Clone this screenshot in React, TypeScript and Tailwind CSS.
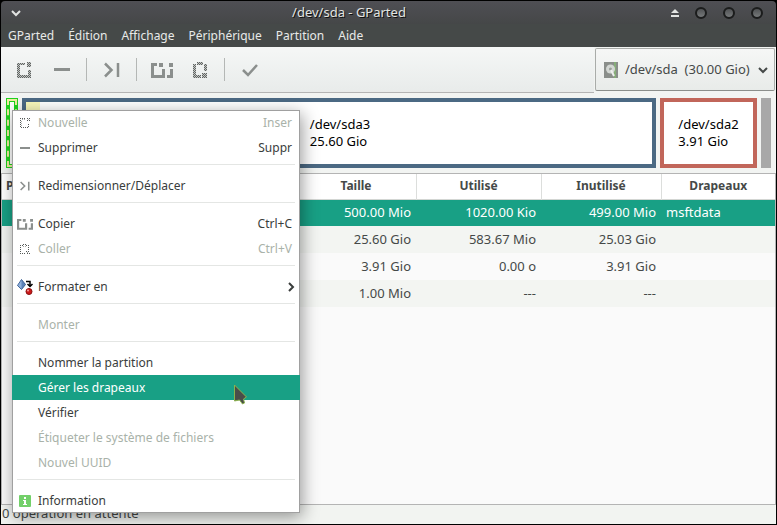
import React from 'react';

type IconProps = { className?: string };

function Checker({ id }: { id: string }) {
  return (
    <defs>
      <pattern id={id} width="2" height="2" patternUnits="userSpaceOnUse">
        <path d="M0 0h1v1H0zM1 1h1v1H1z" fill="#5f6361" />
        <path d="M1 0h1v1H1zM0 1h1v1H0z" fill="#c3c6c4" />
      </pattern>
    </defs>
  );
}

function NewIcon({ className }: IconProps) {
  return (
    <svg viewBox="0 0 14 16" className={className} shapeRendering="crispEdges" aria-hidden="true">
      <Checker id="checker-new" />
      <path d="M0 1h8v2H3v10h8V8h3v8H0zM10 0h4v5h-4z" fill="url(#checker-new)" />
    </svg>
  );
}

function SmallNewIcon({ className }: IconProps) {
  return (
    <svg viewBox="0 0 10 10" className={className} fill="none" stroke="#555957" shapeRendering="crispEdges" strokeDasharray="1 1" aria-hidden="true">
      <path d="M5 .5H.5v9h8V5M7 .5h3M7 2.500h3" />
      <path d="M5 1.500H1.500M8 1.500h2M1.500 3v6" stroke="#a9acaa" />
    </svg>
  );
}

function MinusIcon({ className }: IconProps) {
  return (
    <svg viewBox="0 0 16 16" className={className} fill="currentColor" aria-hidden="true">
      <path d="M0 6h16v3H0z" />
    </svg>
  );
}

function SmallMinusIcon({ className }: IconProps) {
  return (
    <svg viewBox="0 0 10 10" className={className} fill="currentColor" aria-hidden="true">
      <path d="M0 4h10v2H0z" />
    </svg>
  );
}

function ResizeIcon({ className }: IconProps) {
  return (
    <svg viewBox="0 0 16 16" className={className} fill="none" stroke="currentColor" strokeWidth="2.500" aria-hidden="true">
      <path d="M1 1.500L7.500 8 1 14.500M14 1v14" />
    </svg>
  );
}

function CopyIcon({ className }: IconProps) {
  return (
    <svg viewBox="0 0 22 16" className={className} fill="currentColor" aria-hidden="true">
      <path d="M0 1h6v3H3v9h8V7h3v9H0zM8 1h4v4H8zM18 1h4v4h-4zM19 7h3v9h-6v-3h3z" />
    </svg>
  );
}

function PasteIcon({ className }: IconProps) {
  return (
    <svg viewBox="0 0 14 16" className={className} shapeRendering="crispEdges" aria-hidden="true">
      <Checker id="checker-paste" />
      <path d="M4 0h6v3H4zM0 2h3v3h0v8h5v3H0zM11 2h3v7h-3zM9 11h5v5H9z" fill="url(#checker-paste)" />
    </svg>
  );
}

function SmallPasteIcon({ className }: IconProps) {
  return (
    <svg viewBox="0 0 10 10" className={className} fill="none" stroke="#555957" shapeRendering="crispEdges" strokeDasharray="1 1" aria-hidden="true">
      <path d="M3 1.500H.5v8H6M8.500 6V1.500H6M3 .5h4M6 7.500h3M7 9.500h3" />
      <path d="M3 2.500h4M7 8.500h2" stroke="#a9acaa" />
    </svg>
  );
}

function CheckIcon({ className }: IconProps) {
  return (
    <svg viewBox="0 0 16 16" className={className} fill="none" stroke="currentColor" strokeWidth="2.500" aria-hidden="true">
      <path d="M1 8l5 5L15 3" />
    </svg>
  );
}

function FormatIcon({ className }: IconProps) {
  return (
    <svg viewBox="0 0 16 16" className={className} aria-hidden="true">
      <path d="M4.500 .5l4 5-4 5-4-4z" fill="#5b83b8" stroke="#3a5f94" />
      <path d="M4.500 1v9L1 6.500z" fill="#8fb0da" />
      <path d="M9 2.500h4V6M10.500 5l2.500 2.500L15.500 5" fill="none" stroke="#000" strokeWidth="1.500" />
      <circle cx="12" cy="12.500" r="3" fill="#cc1a1a" stroke="#8a1010" />
      <circle cx="11" cy="11.500" r="1" fill="#f4a0a0" />
    </svg>
  );
}

function InfoIcon({ className }: IconProps) {
  return (
    <svg viewBox="0 0 12 12" className={className} aria-hidden="true">
      <rect width="12" height="12" rx="1" fill="#73d06a" />
      <path d="M5 2h2v2H5zM4 5h3v4h1v1H4V9h1V6H4z" fill="#fff" />
    </svg>
  );
}

function DiskIcon({ className }: IconProps) {
  return (
    <svg viewBox="0 0 14 16" className={className} aria-hidden="true">
      <rect width="14" height="16" fill="#8a8e8a" />
      <path d="M10 0h2v16h-2z" fill="#86ad78" />
      <circle cx="6.500" cy="7" r="4.500" fill="#d3d7d3" />
      <circle cx="6.500" cy="7" r="1.500" fill="#9a9f9a" />
      <path d="M7 8l3 6" stroke="#eef0ee" strokeWidth="2" />
    </svg>
  );
}

function Chevron({ className }: IconProps) {
  return (
    <svg viewBox="0 0 10 8" className={className} fill="none" stroke="currentColor" strokeWidth="2" aria-hidden="true">
      <path d="M1 2l4 4 4-4" />
    </svg>
  );
}

function TitleBar() {
  return (
    <header className="flex h-[23px] items-center rounded-t bg-linear-to-b from-[#4f4f54] to-[#454748] text-[#e2e4e2]">
      <button aria-label="Menu de la fenêtre" className="ml-2.5 flex w-16"><Chevron className="h-2 w-2.5" /></button>
      <h1 className="flex-1 pr-12 text-center [text-shadow:1px_1px_0_#111]">/dev/sda - GParted</h1>
      <div className="flex items-center gap-4 pr-[13px]">
        <button aria-label="Enrouler">
          <svg viewBox="0 0 8 8" className="h-2 w-2" fill="currentColor" aria-hidden="true"><path d="M4 0l4 4H0zM0 6h8v2H0z" /></svg>
        </button>
        {['Réduire', 'Agrandir', 'Fermer'].map((name) => (
          <button key={name} aria-label={name} className="size-3 rounded-full border-2 border-[#1b1c1c] bg-linear-to-b from-[#505254] to-[#76797a] bg-clip-padding" />
        ))}
      </div>
    </header>
  );
}

function MenuBar() {
  return (
    <nav className="flex h-[23px] items-center gap-3.5 bg-[#454948] px-[7px] text-xs text-[#e8eae8]">
      {['GParted', 'Édition', 'Affichage', 'Périphérique', 'Partition', 'Aide'].map((name) => (
        <button key={name}>{name}</button>
      ))}
    </nav>
  );
}

function ToolButton({ label, children }: { label: string; children: React.ReactNode }) {
  return <button aria-label={label} className="flex w-[38px] items-center justify-center">{children}</button>;
}

function ToolSeparator() {
  return <div className="my-[11px] mr-1.5 ml-[5px] w-px bg-[#b4b7b5]" />;
}

function Toolbar() {
  return (
    <div className="flex h-[46px] bg-linear-to-b from-[#f5f7f6] to-[#e8ebea] text-[#8b8f8d]">
      <div className="flex flex-1 border-b border-[#b4b4b4] pl-1">
        <ToolButton label="Nouvelle"><NewIcon className="h-4 w-3.5" /></ToolButton>
        <ToolButton label="Supprimer"><MinusIcon className="size-4" /></ToolButton>
        <ToolSeparator />
        <ToolButton label="Redimensionner/Déplacer"><ResizeIcon className="size-4" /></ToolButton>
        <ToolSeparator />
        <ToolButton label="Copier"><CopyIcon className="h-4 w-[22px]" /></ToolButton>
        <ToolButton label="Coller"><PasteIcon className="h-4 w-3.5" /></ToolButton>
        <ToolSeparator />
        <ToolButton label="Appliquer"><CheckIcon className="size-4" /></ToolButton>
      </div>
      <div className="flex bg-[#f2f4f2] px-px pt-px pb-0.5">
        <label className="flex items-center rounded-xs border border-[#a9aca9] border-b-[#8b8e8b] bg-linear-to-b from-[#f6f7f6] to-[#e8ebe9] pr-1.5 pl-2 text-[#454948]">
          <DiskIcon className="h-4 w-3.5" />
          <select aria-label="Périphérique" className="ml-[7px] appearance-none bg-transparent pr-2">
            <option>{'/dev/sda\u00a0\u00a0(30.00 Gio)'}</option>
          </select>
          <Chevron className="h-2 w-2.5" />
        </label>
      </div>
    </div>
  );
}

function DiskMap() {
  return (
    <div className="flex h-20 gap-1 bg-[#f2f4f2] p-[5px] text-black">
      <div className="w-3 bg-[#1fd21f] p-px">
        <div className="h-full border-2 border-dashed border-[#f0eda0] p-px">
          <div className="h-full bg-white" />
        </div>
      </div>
      <div className="flex flex-1 border-4 border-[#4b6983] bg-white">
        <div className="w-3.5 bg-[#f8f8ba]" />
        <div className="flex flex-1 items-center justify-center pr-3">
          <p>/dev/sda3<br />25.60 Gio</p>
        </div>
      </div>
      <div className="flex w-[97px] items-center justify-center border-4 border-[#c1665a] bg-white">
        <p>/dev/sda2<br />3.91 Gio</p>
      </div>
      <div className="w-2.5 bg-[#a8a8a8]" />
    </div>
  );
}

const rows = [
  ['500.00 Mio', '1020.00 Kio', '499.00 Mio', 'msftdata'],
  ['25.60 Gio', '583.67 Mio', '25.03 Gio', ''],
  ['3.91 Gio', '0.00 o', '3.91 Gio', ''],
  ['1.00 Mio', '---', '---', ''],
];

function PartitionTable() {
  return (
    <div className="flex-1 border border-[#b4b4b4] bg-[#fafafa]">
      <table className="w-full table-fixed border-collapse text-[#454948]">
        <colgroup>
          <col />
          <col className="w-[120px]" />
          <col className="w-[125px]" />
          <col className="w-[120px]" />
          <col className="w-[114px]" />
        </colgroup>
        <thead className="text-xs">
          <tr className="h-[25px] border-b border-[#d3d6d3] bg-white">
            <th className="border-r border-[#dcdedc] p-0 pl-1 text-left">Partition</th>
            <th className="border-r border-[#dcdedc] p-0">Taille</th>
            <th className="border-r border-[#dcdedc] p-0">Utilisé</th>
            <th className="border-r border-[#dcdedc] p-0">Inutilisé</th>
            <th className="p-0">Drapeaux</th>
          </tr>
        </thead>
        <tbody>
          {rows.map((row, i) => (
            <tr key={i} className={i === 0 ? 'h-[27px] bg-[#18a085] text-white' : i % 2 ? 'h-[27px] bg-[#f3f5f2]' : 'h-[27px] bg-[#fafafa]'}>
              <td className="p-0" />
              <td className="p-0 pr-[5px] text-right">{row[0]}</td>
              <td className="p-0 pr-[5px] text-right">{row[1]}</td>
              <td className="p-0 pr-[5px] text-right">{row[2]}</td>
              <td className="p-0 pl-[5px]">{row[3]}</td>
            </tr>
          ))}
        </tbody>
      </table>
    </div>
  );
}

type ItemProps = { label: string; icon?: React.ReactNode; hint?: string; disabled?: boolean; active?: boolean; submenu?: boolean };

function Item({ label, icon, hint, disabled, active, submenu }: ItemProps) {
  const tone = active ? 'bg-[#18a085] text-white' : disabled ? 'text-[#a9b2a9]' : 'text-[#3a3d3c]';
  return (
    <button role="menuitem" disabled={disabled} className={`flex h-[25px] w-full items-center pr-2 pl-[5px] text-left ${tone}`}>
      <span className="mr-[5px] flex w-4 justify-center text-[#8b8f8d]">{icon}</span>
      <span className="flex-1">{label}</span>
      {hint && <span>{hint}</span>}
      {submenu && <Chevron className="-mr-1 h-2 w-2.5 -rotate-90" />}
    </button>
  );
}

function Separator() {
  return <div role="separator" className="mx-[5px] mt-1 mb-2 h-px bg-[#e4e6e4]" />;
}

function ContextMenu() {
  return (
    <div role="menu" className="absolute top-[110px] left-3 w-72 bg-white text-xs shadow-[inset_0_0_0_1px_#a0a0a0,2px_4px_16px_rgba(0,0,0,0.4)]">
      <Item label="Nouvelle" hint="Inser" disabled icon={<SmallNewIcon className="size-2.5" />} />
      <Item label="Supprimer" hint="Suppr" icon={<SmallMinusIcon className="size-2.5" />} />
      <Separator />
      <Item label="Redimensionner/Déplacer" icon={<ResizeIcon className="size-2.5" />} />
      <Separator />
      <Item label="Copier" hint="Ctrl+C" icon={<CopyIcon className="h-3 w-4" />} />
      <Item label="Coller" hint="Ctrl+V" disabled icon={<SmallPasteIcon className="size-2.5" />} />
      <Separator />
      <Item label="Formater en" submenu icon={<FormatIcon className="size-4" />} />
      <Separator />
      <Item label="Monter" disabled />
      <Separator />
      <Item label="Nommer la partition" />
      <Item label="Gérer les drapeaux" active />
      <Item label="Vérifier" />
      <Item label="Étiqueter le système de fichiers" disabled />
      <Item label="Nouvel UUID" disabled />
      <Separator />
      <Item label="Information" icon={<InfoIcon className="size-3" />} />
    </div>
  );
}

export default function App() {
  return (
    <div className="relative flex min-h-screen flex-col bg-black px-px pt-px pb-px font-['Noto_Sans',sans-serif] text-[13px] leading-[17px]">
      <TitleBar />
      <MenuBar />
      <Toolbar />
      <DiskMap />
      <PartitionTable />
      <footer className="h-[19px] bg-[#f2f4f1] px-px text-[#454948]">0 opération en attente</footer>
      <ContextMenu />
      <svg viewBox="0 0 14 22" className="absolute top-[384px] left-[233px] h-[22px] w-3.5" aria-hidden="true">
        <path d="M1.500 1v16l5-1 3 4 2-1-1-4 3-2z" fill="#4a4d4a" stroke="#8cb34f" />
      </svg>
    </div>
  );
}
